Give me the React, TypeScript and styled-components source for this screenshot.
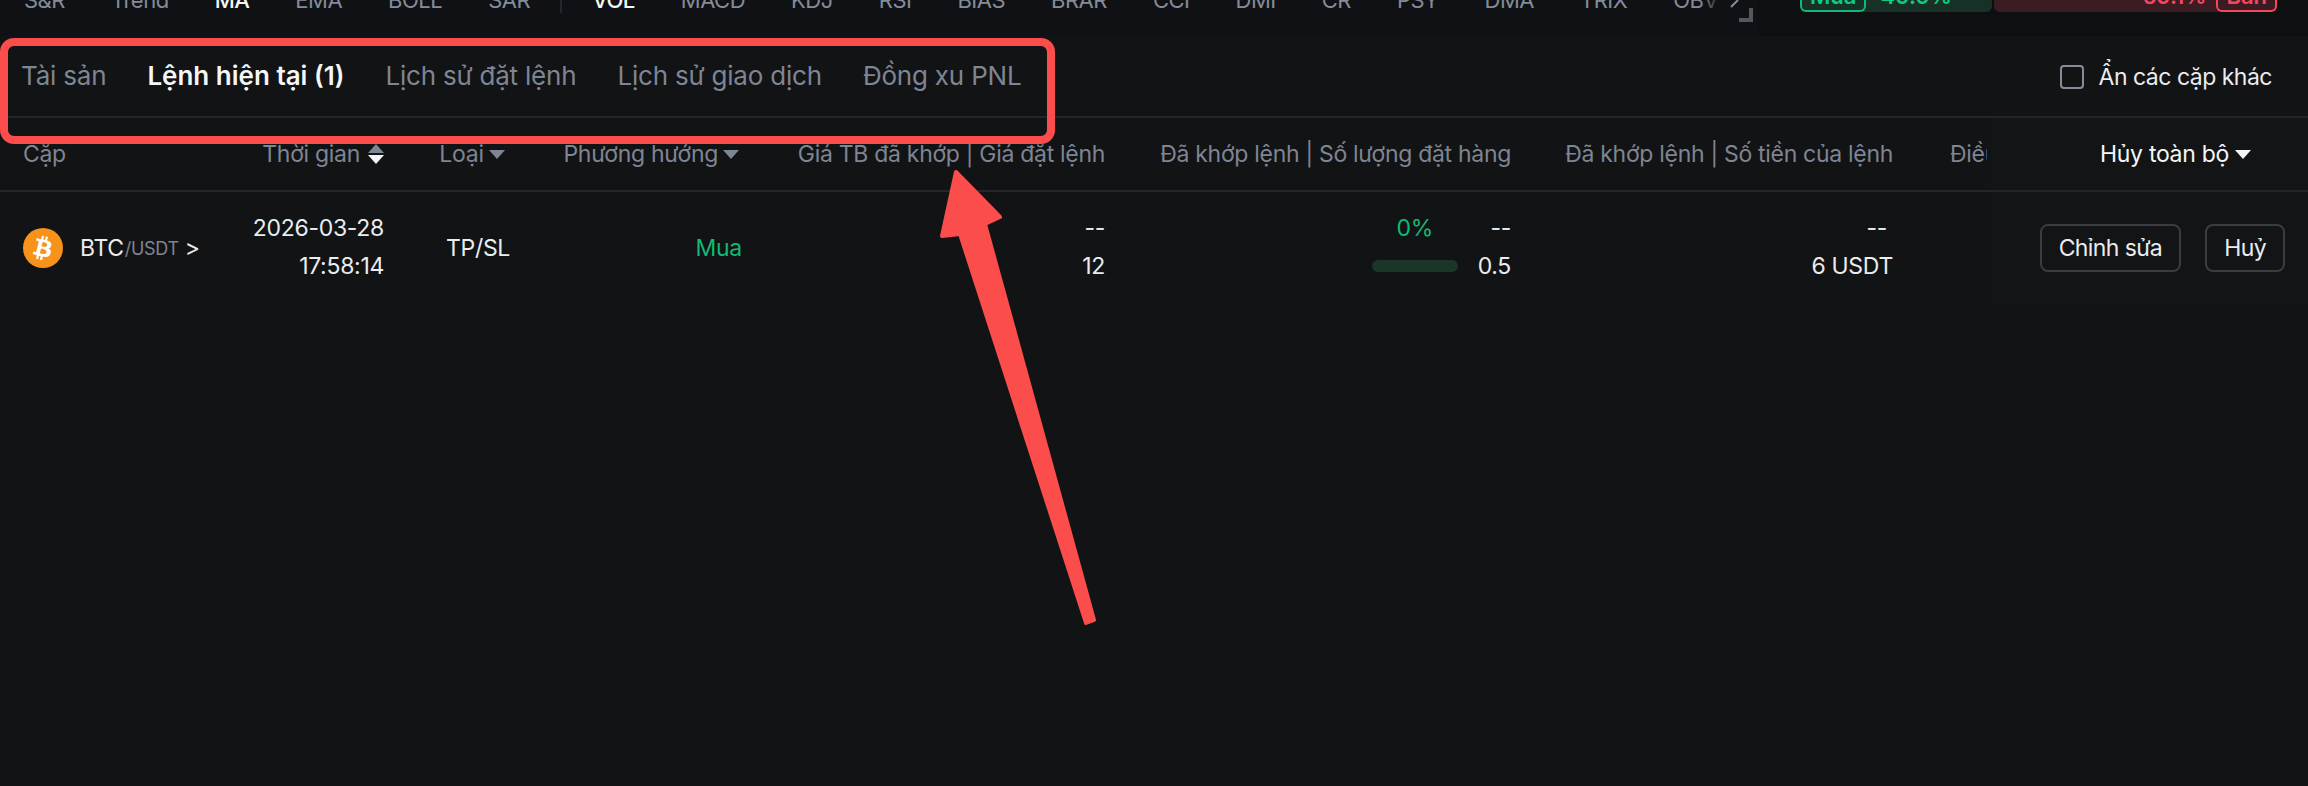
import React from 'react';
import styled, { createGlobalStyle } from 'styled-components';

const GlobalStyle = createGlobalStyle`
  html, body { margin: 0; padding: 0; background: #121315; }
  body { font-family: Inter, "Noto Sans", "Liberation Sans", sans-serif; }
  * { box-sizing: border-box; }
`;

const Page = styled.div`
  position: relative;
  width: 2308px;
  height: 786px;
  overflow: hidden;
  background: #121315;
`;

// --- top strip, cut off by the screenshot ---
const TopStrip = styled.div`
  display: flex;
  height: 36px;
  background: #0e0f11;
  overflow: hidden;
`;

const Indicators = styled.div`
  width: 1758px;
  display: flex;
  align-items: flex-start;
  padding-left: 24px;
  gap: 46px;
  position: relative;
  background: #101114;
`;

const Indicator = styled.span<{ $active?: boolean }>`
  margin-top: -12px;
  font-size: 22px;
  line-height: 24px;
  letter-spacing: -0.5px;
  color: ${(p) => (p.$active ? '#f5f6f7' : '#858c99')};
  font-weight: ${(p) => (p.$active ? 500 : 400)};
`;

const IndicatorDivider = styled.i`
  width: 2px;
  height: 13px;
  margin: 0 -16px;
  background: #24262b;
`;

const MoreFade = styled.i`
  position: absolute;
  left: 1700px;
  top: 0;
  width: 24px;
  height: 12px;
  background: linear-gradient(to right, rgba(16, 17, 20, 0), #101114);
`;

const MoreChevron = styled.svg`
  position: absolute;
  left: 1730px;
  top: 0;
  width: 10px;
  height: 8px;
`;

const CornerHandle = styled.i`
  position: absolute;
  left: 1739px;
  top: 8px;
  width: 14px;
  height: 14px;
  border-right: 4px solid #55575c;
  border-bottom: 4px solid #55575c;
`;

const Sentiment = styled.div`
  margin-left: 42px;
  width: 477px;
  height: 12px;
  display: flex;
  gap: 2px;
`;

const SentimentSide = styled.div<{ $sell?: boolean }>`
  flex: ${(p) => (p.$sell ? 'none' : '1')};
  width: ${(p) => (p.$sell ? '283px' : 'auto')};
  display: flex;
  flex-direction: ${(p) => (p.$sell ? 'row-reverse' : 'row')};
  gap: ${(p) => (p.$sell ? '10px' : '14px')};
  height: 12px;
  background: ${(p) => (p.$sell ? '#3a1c22' : '#173127')};
  border-radius: 0 0 6px 6px;
  color: ${(p) => (p.$sell ? '#f6465d' : '#0ecb81')};
  font-size: 22px;
  font-weight: 600;
  line-height: 24px;
`;

const SentimentChip = styled.span<{ $sell?: boolean }>`
  height: 12px;
  padding: 0 8px;
  display: flex;
  align-items: flex-start;
  border: 2px solid ${(p) => (p.$sell ? '#f6465d' : '#13b877')};
  border-top: none;
  border-radius: 0 0 6px 6px;
  overflow: hidden;
`;

const SentimentValue = styled.span`
  display: block;
  margin-top: -16px;
`;

// --- tabs ---
const TabBar = styled.div`
  height: 82px;
  display: flex;
  align-items: flex-start;
  justify-content: space-between;
  padding: 22px 36px 0 21px;
  border-bottom: 2px solid #23252a;
`;

const Tabs = styled.div`
  display: flex;
  gap: 41px;
`;

const Tab = styled.span<{ $active?: boolean }>`
  font-size: 26px;
  line-height: 36px;
  letter-spacing: ${(p) => (p.$active ? '0' : '-0.2px')};
  color: ${(p) => (p.$active ? '#f5f6f7' : '#7e8593')};
  font-weight: ${(p) => (p.$active ? 600 : 400)};
`;

const HideOthers = styled.label`
  display: flex;
  align-items: center;
  gap: 15px;
  margin-top: 1px;
  font-size: 23px;
  line-height: 36px;
  letter-spacing: -0.5px;
  color: #eaecef;
`;

const Checkbox = styled.i`
  width: 24px;
  height: 24px;
  border: 2px solid #858c99;
  border-radius: 4px;
`;

// --- table ---
const columns = '243px 141px 188px 170px 363px 406px 382px 94px 321px';

const HeaderRow = styled.div`
  display: grid;
  grid-template-columns: ${columns};
  height: 74px;
  align-items: center;
  border-bottom: 2px solid #23252a;
  font-size: 23px;
  letter-spacing: -0.3px;
  color: #7e8593;
`;

const DataRow = styled.div`
  display: grid;
  grid-template-columns: ${columns};
  height: 112px;
  align-items: center;
  font-size: 23px;
  letter-spacing: -0.3px;
  color: #eaecef;
`;

const Cell = styled.div<{ $align?: 'left' | 'center' | 'right' }>`
  display: flex;
  flex-direction: column;
  white-space: nowrap;
  align-items: ${(p) => (p.$align === 'right' ? 'flex-end' : p.$align === 'center' ? 'center' : 'flex-start')};
`;

const StackCell = styled(Cell)`
  padding-bottom: 3px;
`;

const HeadLabel = styled.div<{ $align?: 'left' | 'center' | 'right' }>`
  display: flex;
  align-items: center;
  gap: 5px;
  white-space: nowrap;
  justify-content: ${(p) => (p.$align === 'right' ? 'flex-end' : p.$align === 'center' ? 'center' : 'flex-start')};
`;

const PairHead = styled(HeadLabel)`
  padding-left: 23px;
`;

const TimeHead = styled(HeadLabel)`
  gap: 8px;
`;

const TypeHead = styled(HeadLabel)`
  padding-right: 12px;
`;

const SideHead = styled(HeadLabel)`
  padding-right: 3px;
`;

const ClippedHead = styled.div`
  padding-left: 57px;
  overflow: hidden;
  white-space: nowrap;
`;

const ActionsHead = styled.div`
  height: 100%;
  display: flex;
  align-items: center;
  gap: 6px;
  padding-left: 113px;
  color: #f5f6f7;
  background: #121416;
`;

const Pair = styled.div`
  display: flex;
  align-items: center;
  padding-left: 23px;
  white-space: nowrap;
`;

const CoinIcon = styled.svg`
  width: 40px;
  height: 40px;
  margin-right: 17px;
`;

const Quote = styled.span`
  font-size: 18px;
  margin-left: 1px;
  color: #7e8593;
`;

const PairArrow = styled.span`
  margin-left: 6px;
`;

const Line = styled.div`
  line-height: 38px;
`;

const AmountDash = styled(Line)`
  margin-right: 6px;
`;

const BuyText = styled.span`
  color: #12b873;
`;

const FilledCell = styled.div`
  display: grid;
  grid-template-columns: 86px auto;
  justify-content: end;
  column-gap: 20px;
  align-items: center;
  line-height: 38px;
  padding-bottom: 3px;
`;

const Percent = styled.div`
  text-align: center;
  color: #12b873;
`;

const ValueRight = styled.div`
  text-align: right;
`;

const Progress = styled.div`
  height: 12px;
  border-radius: 6px;
  background: #1b3529;
`;

const Actions = styled.div`
  height: 100%;
  display: flex;
  align-items: center;
  justify-content: flex-end;
  gap: 24px;
  padding-right: 23px;
  background: #121416;
`;

const ActionButton = styled.button`
  height: 48px;
  padding: 0 17px;
  background: transparent;
  border: 2px solid #3a3c42;
  border-radius: 8px;
  color: #eaecef;
  font: inherit;
  letter-spacing: -0.6px;
`;

const Caret = styled.i<{ $up?: boolean; $color?: string }>`
  display: block;
  width: 0;
  height: 0;
  border-left: 8px solid transparent;
  border-right: 8px solid transparent;
  border-${(p) => (p.$up ? 'bottom' : 'top')}: 9px solid ${(p) => p.$color || '#7e8593'};
`;

const SortCarets = styled.span`
  display: flex;
  flex-direction: column;
  gap: 2px;
`;

// --- annotation drawn over the screenshot ---
const Highlight = styled.div`
  position: absolute;
  left: 0;
  top: 38px;
  width: 1055px;
  height: 106px;
  border: 8px solid #fb4d4b;
  border-radius: 14px;
  pointer-events: none;
`;

const ArrowMark = styled.svg`
  position: absolute;
  left: 930px;
  top: 160px;
  width: 180px;
  height: 480px;
  pointer-events: none;
`;

const indicators = ['S&R', 'Trend', 'MA', 'EMA', 'BOLL', 'SAR'];
const indicators2 = ['VOL', 'MACD', 'KDJ', 'RSI', 'BIAS', 'BRAR', 'CCI', 'DMI', 'CR', 'PSY', 'DMA', 'TRIX', 'OBV'];

export default function App() {
  return (
    <Page>
      <GlobalStyle />
      <TopStrip>
        <Indicators>
          {indicators.map((name) => (
            <Indicator key={name} $active={name === 'MA'}>{name}</Indicator>
          ))}
          <IndicatorDivider />
          {indicators2.map((name) => (
            <Indicator key={name} $active={name === 'VOL'}>{name}</Indicator>
          ))}
          <MoreFade />
          <MoreChevron viewBox="0 0 10 8">
            <path d="M1 7 L8 0" stroke="#858c99" strokeWidth="2" fill="none" />
          </MoreChevron>
          <CornerHandle />
        </Indicators>
        <Sentiment>
          <SentimentSide>
            <SentimentChip><SentimentValue>Mua</SentimentValue></SentimentChip>
            <SentimentValue>40.9%</SentimentValue>
          </SentimentSide>
          <SentimentSide $sell>
            <SentimentChip $sell><SentimentValue>Bán</SentimentValue></SentimentChip>
            <SentimentValue>59.1%</SentimentValue>
          </SentimentSide>
        </Sentiment>
      </TopStrip>

      <TabBar>
        <Tabs>
          <Tab>Tài sản</Tab>
          <Tab $active>Lệnh hiện tại (1)</Tab>
          <Tab>Lịch sử đặt lệnh</Tab>
          <Tab>Lịch sử giao dịch</Tab>
          <Tab>Đồng xu PNL</Tab>
        </Tabs>
        <HideOthers>
          <Checkbox />
          Ẩn các cặp khác
        </HideOthers>
      </TabBar>

      <HeaderRow>
        <PairHead>Cặp</PairHead>
        <TimeHead $align="right">
          Thời gian
          <SortCarets>
            <Caret $up />
            <Caret $color="#f5f6f7" />
          </SortCarets>
        </TimeHead>
        <TypeHead $align="center">Loại <Caret /></TypeHead>
        <SideHead $align="right">Phương hướng <Caret /></SideHead>
        <HeadLabel $align="right">Giá TB đã khớp | Giá đặt lệnh</HeadLabel>
        <HeadLabel $align="right">Đã khớp lệnh | Số lượng đặt hàng</HeadLabel>
        <HeadLabel $align="right">Đã khớp lệnh | Số tiền của lệnh</HeadLabel>
        <ClippedHead>Điều kiện kích hoạt</ClippedHead>
        <ActionsHead>Hủy toàn bộ <Caret $color="#f5f6f7" /></ActionsHead>
      </HeaderRow>

      <DataRow>
        <Pair>
          <CoinIcon viewBox="0 0 40 40">
            <circle cx="20" cy="20" r="20" fill="#f7931a" />
            <path
              fill="#fff"
              fillRule="evenodd"
              d="M28.4 17.5c.4-2.6-1.6-4-4.3-4.9l.9-3.5-2.2-.5-.8 3.4-1.7-.4.8-3.4-2.1-.5-.9 3.5-1.4-.3-3-.8-.6 2.3s1.6.4 1.6.4c.9.2 1 .8 1 1.2l-1 3.9-1.4 5.5c-.1.3-.4.7-1 .6 0 0-1.6-.4-1.6-.4l-1.1 2.5 2.8.7 1.5.4-.9 3.6 2.1.5.9-3.5 1.7.4-.9 3.5 2.2.5.9-3.6c3.7.7 6.5.4 7.6-2.9.9-2.7 0-4.2-2-5.2 1.4-.3 2.5-1.3 2.8-3.2zm-5 6.9c-.7 2.7-5.1 1.2-6.6.9l1.2-4.7c1.4.4 6.1 1.1 5.4 3.8zm.7-7c-.6 2.4-4.3 1.2-5.5.9l1.1-4.3c1.2.3 5.1.9 4.4 3.4z"
            />
          </CoinIcon>
          BTC<Quote>/USDT</Quote>
          <PairArrow>&gt;</PairArrow>
        </Pair>
        <StackCell $align="right">
          <Line>2026-03-28</Line>
          <Line>17:58:14</Line>
        </StackCell>
        <Cell $align="center">TP/SL</Cell>
        <Cell $align="right"><BuyText>Mua</BuyText></Cell>
        <StackCell $align="right">
          <Line>--</Line>
          <Line>12</Line>
        </StackCell>
        <FilledCell>
          <Percent>0%</Percent>
          <ValueRight>--</ValueRight>
          <Progress />
          <ValueRight>0.5</ValueRight>
        </FilledCell>
        <StackCell $align="right">
          <AmountDash>--</AmountDash>
          <Line>6 USDT</Line>
        </StackCell>
        <div />
        <Actions>
          <ActionButton>Chỉnh sửa</ActionButton>
          <ActionButton>Huỷ</ActionButton>
        </Actions>
      </DataRow>

      <Highlight />
      <ArrowMark viewBox="0 0 180 480">
        <path
          fill="#fb4d4b"
          stroke="#fb4d4b"
          strokeWidth="4"
          strokeLinejoin="round"
          d="M26 12 L70 57 L55 64 L164 460 L156 463 L30 74 L12 76 Z"
        />
      </ArrowMark>
    </Page>
  );
}
